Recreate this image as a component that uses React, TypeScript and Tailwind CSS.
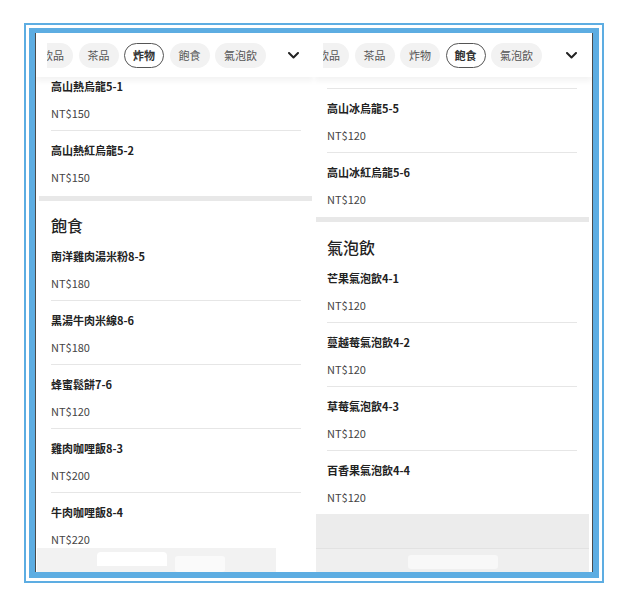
import React from "react";

type Item = { name: string; price: number };

const CHIPS = ["飲品", "茶品", "炸物", "飽食", "氣泡飲"];

const Chevron: React.FC = () => (
  <svg width="11" height="7" viewBox="0 0 11 7" fill="none">
    <path d="M1 1l4.5 4.5L10 1" stroke="#222" strokeWidth="2" strokeLinecap="round" strokeLinejoin="round" />
  </svg>
);

// top category bar, scrolled a little to the left
const TabBar: React.FC<{ active: string; clipLeft: string }> = ({ active, clipLeft }) => (
  <div className="relative z-10 flex h-[44px] shrink-0 items-center bg-white shadow-[0_4px_6px_rgba(0,0,0,0.05)]">
    <div className={`flex h-full flex-1 items-center overflow-hidden ${clipLeft}`}>
      <div className="ml-[-14px] flex items-center gap-[5.5px]">
        {CHIPS.map((c) =>
          c === active ? (
            <span
              key={c}
              className="flex h-[25px] shrink-0 items-center rounded-full border-[1.5px] border-[#555] bg-white px-[8px] text-[11px] font-bold text-[#333]"
            >
              {c}
            </span>
          ) : (
            <span
              key={c}
              className="flex h-[25px] shrink-0 items-center rounded-full bg-[#f2f2f2] px-[9px] text-[11px] text-[#555]"
            >
              {c}
            </span>
          )
        )}
      </div>
    </div>
    <div className="flex h-full w-[41px] shrink-0 items-center justify-center bg-white">
      <Chevron />
    </div>
  </div>
);

const MenuItem: React.FC<{ item: Item; last?: boolean }> = ({ item, last }) => (
  <div className={last ? "w-[250px] pt-[11px] pb-[9px]" : "w-[250px] border-b border-[#e6e6e6] pt-[11px] pb-[9px]"}>
    <div className="text-[11px] font-bold leading-[16px] text-[#222]">{item.name}</div>
    <div className="mt-[11px] text-[11px] leading-[16px] text-[#444]">NT${item.price}</div>
  </div>
);

const LeftPanel: React.FC = () => {
  const fried: Item[] = [
    { name: "高山熱烏龍5-1", price: 150 },
    { name: "高山熱紅烏龍5-2", price: 150 },
  ];
  const meals: Item[] = [
    { name: "南洋雞肉湯米粉8-5", price: 180 },
    { name: "黑湯牛肉米線8-6", price: 180 },
    { name: "蜂蜜鬆餅7-6", price: 120 },
    { name: "雞肉咖哩飯8-3", price: 200 },
    { name: "牛肉咖哩飯8-4", price: 220 },
  ];
  return (
    <div className="relative flex h-full w-[278px] flex-col overflow-hidden bg-white">
      <TabBar active="炸物" clipLeft="ml-[11px]" />
      <div className="flex-1 overflow-hidden">
        <div className="mt-[-10px] pl-[15px]">
          {fried.map((it, i) => (
            <MenuItem key={it.name} item={it} last={i === fried.length - 1} />
          ))}
        </div>
        <div className="h-[2px]" />
        <div className="ml-[3px] mr-[2px] h-[5px] bg-[#e8e8e8]" />
        <div className="pl-[15px]">
          <h3 className="pt-[12px] text-[16px] font-medium leading-[24px] text-[#222]">飽食</h3>
          {meals.map((it, i) => (
            <MenuItem key={it.name} item={it} last={i === meals.length - 1} />
          ))}
        </div>
      </div>
      {/* bottom bar (cart) */}
      <div className="absolute bottom-0 left-[1px] right-[38px] flex h-[24px] items-start bg-[#f2f2f2]">
        <div className="ml-[60px] mt-[4px] h-[14px] w-[70px] rounded-t-[4px] bg-white" />
        <div className="ml-[8px] mt-[8px] h-[16px] w-[50px] rounded-[3px] bg-[#fafafa]" />
      </div>
    </div>
  );
};

const RightPanel: React.FC = () => {
  const tea: Item[] = [
    { name: "高山冰烏龍5-5", price: 120 },
    { name: "高山冰紅烏龍5-6", price: 120 },
  ];
  const soda: Item[] = [
    { name: "芒果氣泡飲4-1", price: 120 },
    { name: "蔓越莓氣泡飲4-2", price: 120 },
    { name: "草莓氣泡飲4-3", price: 120 },
    { name: "百香果氣泡飲4-4", price: 120 },
  ];
  return (
    <div className="relative flex h-full w-[278px] flex-col overflow-hidden bg-white">
      <TabBar active="飽食" clipLeft="ml-[9px]" />
      <div className="flex flex-1 flex-col overflow-hidden">
        <div className="pl-[13px]">
          <div className="h-[12px] w-[250px] border-b border-[#e6e6e6]" />
          {tea.map((it, i) => (
            <MenuItem key={it.name} item={it} last={i === tea.length - 1} />
          ))}
        </div>
        <div className="h-[1px]" />
        <div className="ml-[2px] mr-[3px] h-[5px] shrink-0 bg-[#e8e8e8]" />
        <div className="pl-[13px]">
          <h3 className="pt-[13px] text-[16px] font-medium leading-[24px] text-[#222]">氣泡飲</h3>
          {soda.map((it, i) => (
            <MenuItem key={it.name} item={it} last={i === soda.length - 1} />
          ))}
        </div>
        <div className="ml-[2px] mr-[3px] flex flex-1 flex-col justify-end bg-[#ececec]">
          <div className="flex h-[24px] items-start justify-center border-t border-[#e2e2e2] bg-[#efefef]">
            <div className="mt-[6px] h-[14px] w-[90px] rounded-[3px] bg-[#f8f8f8]" />
          </div>
        </div>
      </div>
    </div>
  );
};

const App: React.FC = () => {
  return (
    <div
      className="h-[607px] w-[628px] bg-white pt-[23px] pl-[24px]"
      style={{ fontFamily: '"Noto Sans CJK TC", "Noto Sans", sans-serif' }}
    >
      <div className="h-[560px] w-[580px] border-2 border-[#5dade2] bg-white p-[3px]">
        <div className="flex h-full border-x-[6px] border-t-[5px] border-b-[6px] border-[#5dade2] bg-white">
          <div className="flex h-full w-full border-x border-[#4a4a4a]">
            <LeftPanel />
            <RightPanel />
          </div>
        </div>
      </div>
    </div>
  );
};

export default App;
